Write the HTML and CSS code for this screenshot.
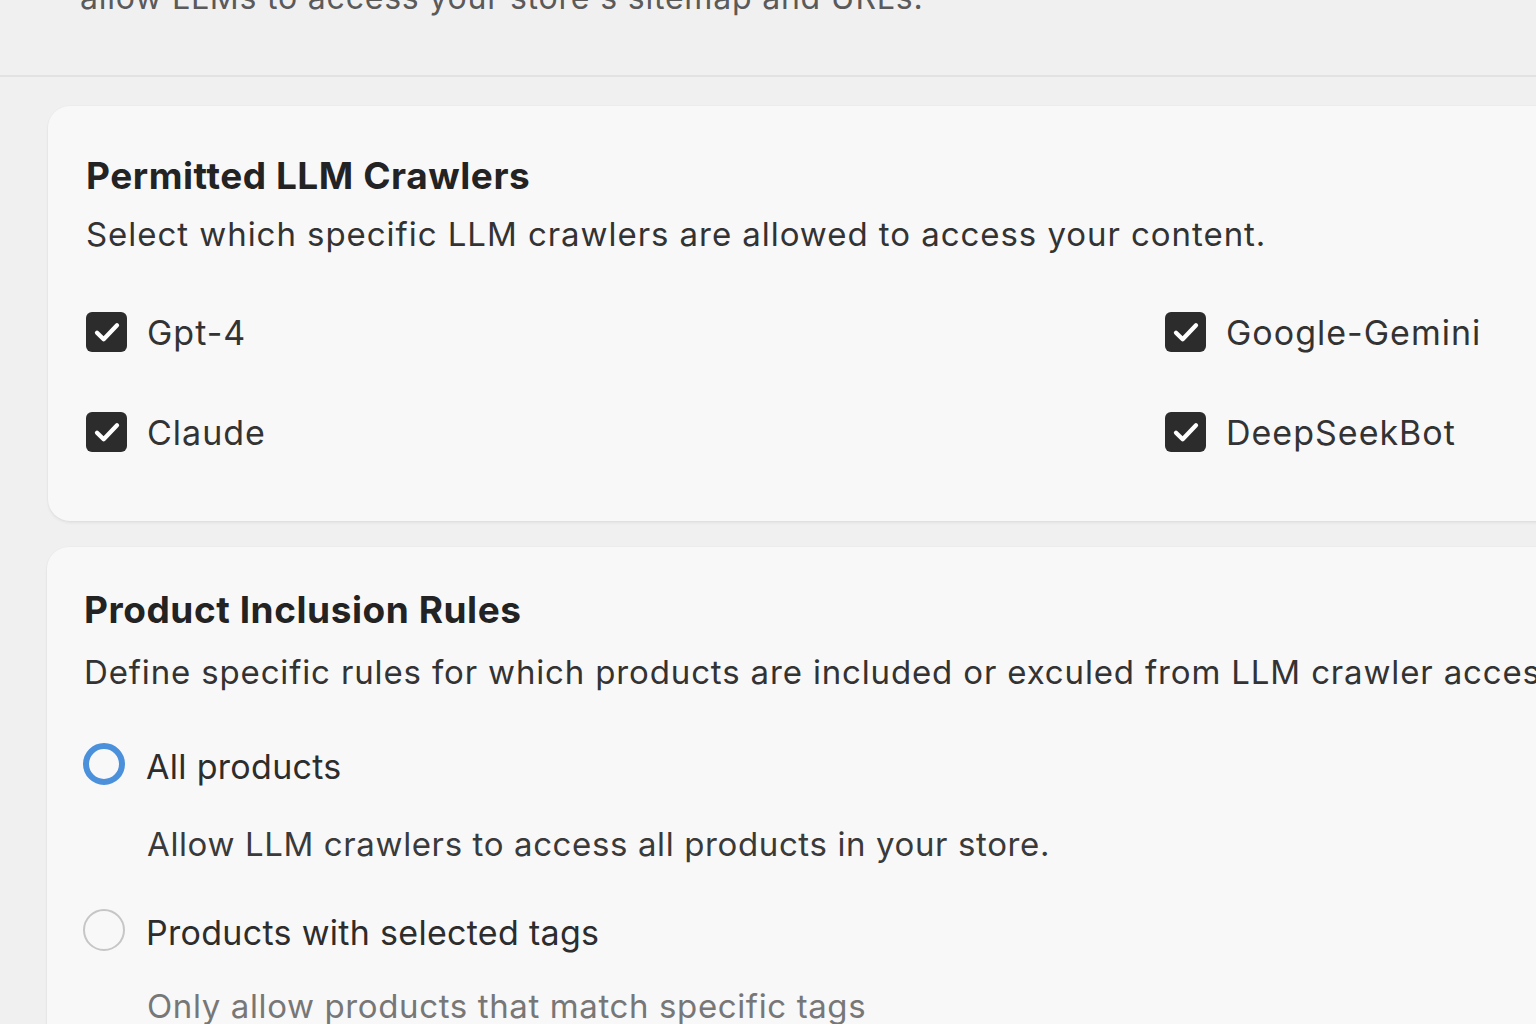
FILE: index.html
```html
<!DOCTYPE html>
<html lang="en">
<head>
<meta charset="utf-8">
<title>LLM Settings</title>
<link rel="stylesheet" href="styles.css">
</head>
<body>
<header class="top">
  <p class="top-text">allow LLMs to access your store's sitemap and URLs.</p>
</header>
<main class="content">
  <section class="card card-crawlers">
    <h2 class="card-title">Permitted LLM Crawlers</h2>
    <p class="card-sub">Select which specific LLM crawlers are allowed to access your content.</p>
    <div class="check-grid">
      <label class="check"><span class="box"><svg viewBox="0 0 24 24" width="32" height="32"><path d="M4.5 12.5L9.5 17.5L19.5 7" fill="none" stroke="#fff" stroke-width="3.2" stroke-linecap="round" stroke-linejoin="round"/></svg></span><span class="check-label">Gpt-4</span></label>
      <label class="check"><span class="box"><svg viewBox="0 0 24 24" width="32" height="32"><path d="M4.5 12.5L9.5 17.5L19.5 7" fill="none" stroke="#fff" stroke-width="3.2" stroke-linecap="round" stroke-linejoin="round"/></svg></span><span class="check-label">Google-Gemini</span></label>
      <label class="check"><span class="box"><svg viewBox="0 0 24 24" width="32" height="32"><path d="M4.5 12.5L9.5 17.5L19.5 7" fill="none" stroke="#fff" stroke-width="3.2" stroke-linecap="round" stroke-linejoin="round"/></svg></span><span class="check-label">Claude</span></label>
      <label class="check"><span class="box"><svg viewBox="0 0 24 24" width="32" height="32"><path d="M4.5 12.5L9.5 17.5L19.5 7" fill="none" stroke="#fff" stroke-width="3.2" stroke-linecap="round" stroke-linejoin="round"/></svg></span><span class="check-label">DeepSeekBot</span></label>
    </div>
  </section>
  <section class="card card-rules">
    <h2 class="card-title">Product Inclusion Rules</h2>
    <p class="card-sub">Define specific rules for which products are included or exculed from LLM crawler access.</p>
    <div class="radio-list">
      <div class="radio-item">
        <div class="radio-row"><span class="radio radio-on"></span><span class="radio-label">All products</span></div>
        <p class="radio-desc">Allow LLM crawlers to access all products in your store.</p>
      </div>
      <div class="radio-item">
        <div class="radio-row"><span class="radio"></span><span class="radio-label">Products with selected tags</span></div>
        <p class="radio-desc muted">Only allow products that match specific tags</p>
      </div>
    </div>
  </section>
</main>
</body>
</html>
```
FILE: styles.css
```css
* { box-sizing: border-box; }
html, body {
  margin: 0;
  padding: 0;
  height: 1024px;
  overflow: hidden;
}
body {
  background: #f1f0f1;
  font-family: Inter, "Noto Sans", "Liberation Sans", sans-serif;
  color: #2b2b2b;
}
.top {
  height: 77px;
  border-bottom: 2px solid #e3e2e3;
  padding-left: 80px;
  overflow: hidden;
}
.top-text {
  margin: -22px 0 0 0;
  font-size: 32px;
  line-height: 40px;
  letter-spacing: 0.8px;
  color: #5a5a5a;
  white-space: nowrap;
}
.content {
  padding: 29px 0 0 48px;
  display: flex;
  flex-direction: column;
  gap: 26px;
}
.card {
  width: 1560px;
  background: #f9f8f9;
  border-radius: 22px;
  box-shadow: 0 2px 3px rgba(0,0,0,0.06), 0 0 0 1px rgba(0,0,0,0.015);
}
.card-crawlers {
  height: 415px;
  padding: 50px 38px 0 38px;
}
.card-rules {
  margin-left: -1px;
  padding: 43px 38px 0 37px;
  height: 520px;
}
.card-title {
  margin: 0;
  font-size: 37px;
  line-height: 40px;
  font-weight: 700;
  color: #232323;
  letter-spacing: 0.55px;
}
.card-sub {
  margin: 18px 0 0 0;
  font-size: 33px;
  line-height: 40px;
  letter-spacing: 0.95px;
  color: #333;
  white-space: nowrap;
}
.card-rules .card-sub {
  margin-top: 22px;
  letter-spacing: 0.85px;
}
.check-grid {
  margin-top: 58px;
  display: grid;
  grid-template-columns: 1079px auto;
  row-gap: 60px;
}
.check {
  display: flex;
  align-items: center;
  gap: 20px;
  height: 40px;
}
.box {
  width: 41px;
  height: 40px;
  border-radius: 6px;
  background: #2c2c2c;
  display: flex;
  align-items: center;
  justify-content: center;
  flex: none;
}
.check-label {
  font-size: 34px;
  color: #333;
  letter-spacing: 1px;
}
.radio-list {
  margin-top: 50px;
  display: flex;
  flex-direction: column;
  gap: 44px;
}
.radio-row {
  display: flex;
  align-items: center;
  gap: 21px;
  height: 44px;
}
.radio {
  width: 42px;
  height: 42px;
  margin-left: -1px;
  border-radius: 50%;
  border: 2px solid #c6c6c6;
  flex: none;
}
.radio-on {
  border: 6px solid #4a90da;
}
.radio-label {
  font-size: 34px;
  color: #2d2d2d;
  letter-spacing: 0.3px;
  padding-top: 4px;
}
.radio-desc {
  margin: 38px 0 0 63px;
  font-size: 33px;
  line-height: 40px;
  letter-spacing: 0.62px;
  color: #3a3a3a;
  white-space: nowrap;
}
.radio-desc.muted {
  margin-top: 34px;
  color: #777;
}
```
